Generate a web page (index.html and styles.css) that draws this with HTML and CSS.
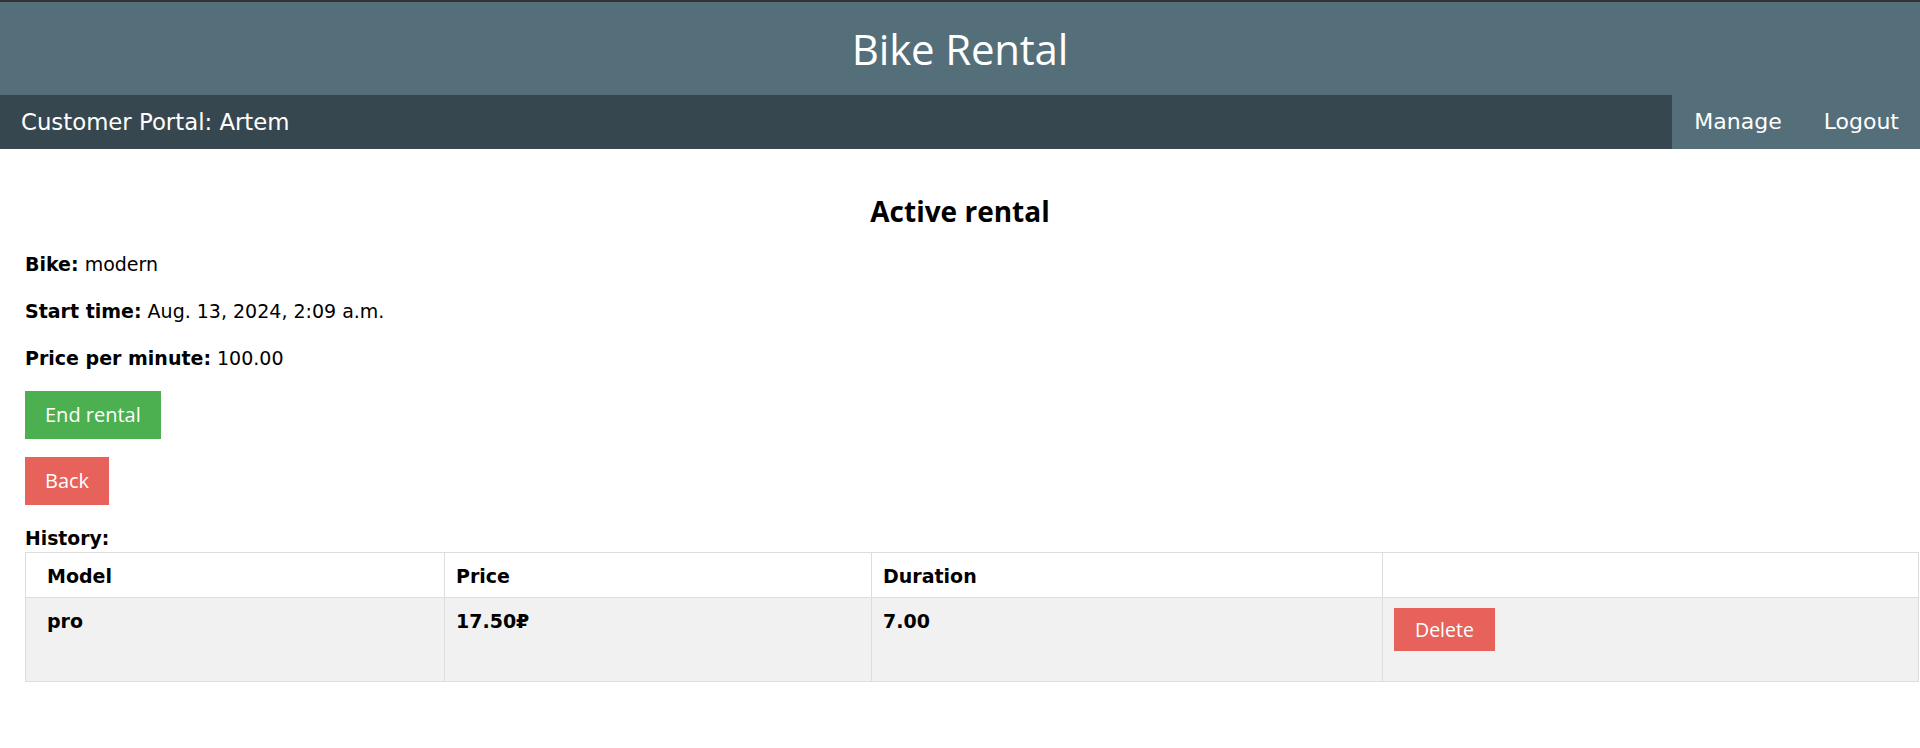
FILE: index.html
```html
<!DOCTYPE html>
<html lang="en">
<head>
<meta charset="utf-8">
<title>Bike Rental</title>
<link rel="stylesheet" href="styles.css">
</head>
<body>
<header class="site-header">
  <div class="site-title">Bike Rental</div>
</header>
<nav class="topnav">
  <div class="portal">Customer Portal: Artem</div>
  <div class="nav-links">
    <a class="nav-link" href="#">Manage</a>
    <a class="nav-link" href="#">Logout</a>
  </div>
</nav>
<main class="content">
  <h2 class="page-title">Active rental</h2>
  <p class="info"><b>Bike:</b> modern</p>
  <p class="info"><b>Start time:</b> Aug. 13, 2024, 2:09 a.m.</p>
  <p class="info"><b>Price per minute:</b> 100.00</p>
  <form class="btn-form"><button type="button" class="btn btn-green">End rental</button></form>
  <form class="btn-form"><button type="button" class="btn btn-red">Back</button></form>
  <div class="history-label">History:</div>
  <table class="history">
    <colgroup>
      <col class="col-model">
      <col class="col-price">
      <col class="col-duration">
      <col class="col-action">
    </colgroup>
    <thead>
      <tr><th>Model</th><th>Price</th><th>Duration</th><th></th></tr>
    </thead>
    <tbody>
      <tr>
        <td>pro</td>
        <td>17.50₽</td>
        <td>7.00</td>
        <td><form class="del-form"><button type="button" class="btn-del">Delete</button></form></td>
      </tr>
    </tbody>
  </table>
</main>
</body>
</html>
```
FILE: styles.css
```css
html, body {
  margin: 0;
  padding: 0;
  background: #ffffff;
}
body {
  font-family: "DejaVu Sans", Verdana, sans-serif;
  color: #000;
}
.site-header {
  background: #546e7a;
  border-top: 2px solid #333333;
  height: 93px;
  text-align: center;
}
.site-title {
  font-family: "Open Sans", "Noto Sans", sans-serif;
  font-size: 42px;
  line-height: 93px;
  color: #ffffff;
  letter-spacing: -0.2px;
}
.topnav {
  display: flex;
  justify-content: space-between;
  background: #37474f;
  height: 54px;
  color: #fff;
  font-size: 22px;
  line-height: 54px;
}
.portal {
  padding-left: 21px;
  font-size: 22.8px;
}
.nav-links {
  display: flex;
  background: #546e7a;
  padding-left: 1px;
}
.nav-link {
  color: #fff;
  text-decoration: none;
  padding: 0 21px;
}
.content {
  padding: 0 25px;
}
.page-title {
  font-family: "Open Sans", "Noto Sans", sans-serif;
  font-weight: 700;
  font-size: 28px;
  line-height: 36px;
  text-align: center;
  margin: 44px 0 21px;
}
.info {
  font-size: 19px;
  line-height: 28px;
  margin: 19px 0;
}
.btn-form {
  margin: 0 0 18px;
}
.btn {
  font-family: "Open Sans", "Noto Sans", sans-serif;
  font-size: 20px;
  line-height: 28px;
  color: #fff;
  border: none;
  padding: 10px 20px;
  margin: 0;
}
.btn-green {
  background: #4caf50;
}
.btn-red {
  background: #e6625a;
}
.history-label {
  font-weight: 700;
  font-size: 18.8px;
  line-height: 22px;
  margin-top: 23px;
  margin-bottom: 2px;
}
.history {
  border-collapse: collapse;
  table-layout: fixed;
  width: calc(100% + 24px);
  font-size: 19px;
  line-height: 22px;
}
.col-model { width: 419px; }
.col-price { width: 427px; }
.col-duration { width: 511px; }
.col-action { width: auto; }
.history th,
.history td {
  border: 1px solid #dddddd;
  text-align: left;
  vertical-align: top;
  font-weight: 700;
  padding: 12px 11px 10px;
}
.history th:first-child,
.history td:first-child {
  padding-left: 21px;
}
.history td {
  background: #f1f1f1;
  padding: 12px 11px 11px;
}
.history td:last-child {
  padding-top: 10px;
}
.del-form {
  margin: 0 0 19px;
}
.btn-del {
  font-family: "Open Sans", "Noto Sans", sans-serif;
  font-size: 19.5px;
  line-height: 27px;
  color: #fff;
  background: #e6625a;
  border: none;
  padding: 8px 21px;
  margin: 0;
}
```
